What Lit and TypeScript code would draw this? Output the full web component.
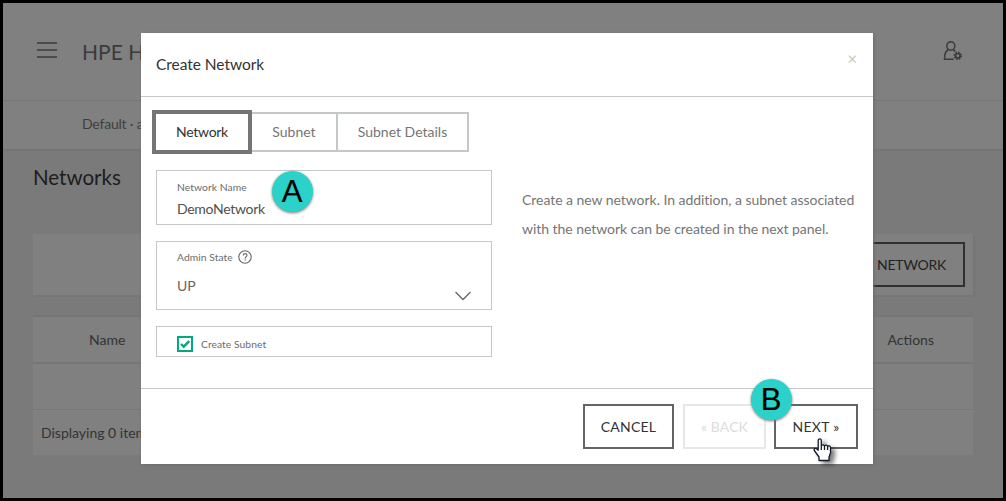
import { LitElement, html, css } from "lit";
import { customElement } from "lit/decorators.js";

@customElement("app-root")
export class AppRoot extends LitElement {
  static styles = css`
    :host { display: block; font-family: "Lato", sans-serif; color: #333; }
    * { box-sizing: border-box; }
    .screen { position: relative; width: 1006px; height: 501px; border: 3px solid #000; overflow: hidden; background: #7a7a7a; }
    .top { height: 98px; background: #808080; border-bottom: 1px solid #757575; display: flex; align-items: center; padding: 0 40px 0 34px; }
    .menu { width: 20px; height: 16px; margin: -3px 25px 0 0; }
    .brand { font-size: 21px; flex: 1; white-space: nowrap; color: #3b3b3b; }
    .user { margin-top: -2px; }
    .nav { height: 50px; background: #808080; border-bottom: 2px solid #757575; padding: 0 79px; line-height: 46px; font-size: 14px; letter-spacing: -.2px; color: #3f3f3f; }
    .page { padding: 0 30px; }
    h1 { font-weight: 400; font-size: 20.500px; line-height: 24px; margin: 14px 0 45px; color: #1d1d1d; }
    .bar { height: 61px; background: #808080; box-shadow: 2px 2px 0 #767676; padding: 8px 8px; display: flex; justify-content: flex-end; margin-bottom: 20px; }
    .ghost { height: 45px; border: 2px solid #303030; width: 190px; text-align: right; padding-right: 17px; line-height: 42px; font-size: 14px; color: #222; letter-spacing: -.25px; }
    .row { background: #808080; height: 46px; display: flex; justify-content: space-between; line-height: 45px; font-size: 14px; color: #333; }
    .head { height: 49px; border-top: 2px solid #767676; border-bottom: 2px solid #767676; padding: 0 39px 0 56px; }
    .rule { border-bottom: 1px solid #767676; }
    .foot { height: 45px; padding-left: 8px; }
    .modal { position: absolute; left: 138px; top: 30px; width: 732px; height: 431px; background: #fff; display: flex; flex-direction: column; box-shadow: 1px 1px 3px #6c6c6c; }
    .mh { height: 64px; border-bottom: 1px solid #c5c9c9; display: flex; justify-content: space-between; padding: 0 15px; line-height: 62px; font-size: 15.500px; letter-spacing: -.04px; }
    .close { color: #c8c8c8; font-size: 17px; line-height: 51px; margin-right: 1px; }
    .mb { flex: 1; padding: 13px 15px 0; }
    .tabs { display: flex; align-items: center; margin: 0 0 16px -4px; height: 44px; }
    .tab { height: 40px; border: 2px solid #c4c9c8; border-left: 0; line-height: 36px; text-align: center; font-size: 14px; color: #757575; }
    .on { height: 44px; width: 100px; border: 4px solid #757575; color: #333; letter-spacing: -.3px; }
    .t2 { width: 86px; } .t3 { width: 131px; }
    .cols { display: flex; gap: 30px; }
    .form { width: 336px; }
    .field { border: 1px solid #c4c9c8; margin-bottom: 16px; padding: 0 20px; color: #666; }
    .f1 { height: 55px; } .f2 { height: 69px; } .f3 { height: 31px; display: flex; gap: 8px; align-items: center; padding-top: 4px; }
    .label { font-size: 10.300px; line-height: 14px; color: #6c6c6c; letter-spacing: .06px; }
    .f1 .label { padding-top: 9px; }
    .f1 .value { padding-top: 6px; color: #4f4f4f; letter-spacing: -.3px; }
    .value { font-size: 14px; line-height: 18px; }
    .f2 .label { display: flex; gap: 5px; align-items: center; padding-top: 8px; }
    .f2 .label svg { margin-top: -1px; }
    .sel { display: flex; justify-content: space-between; padding-top: 13px; }
    .sel svg { margin-top: 14px; }
    .check { width: 16px; height: 16px; border: 2px solid #01a982; display: block; }
    .desc { font-size: 14px; line-height: 29px; color: #757575; padding-top: 15px; white-space: nowrap; letter-spacing: -.045px; }
    .mf { height: 76px; border-top: 1px solid #c5c9c9; padding: 15px 15px 0; display: flex; justify-content: flex-end; }
    .btn { height: 45px; border: 2px solid #636465; text-align: center; line-height: 42px; font-size: 14px; color: #333; letter-spacing: .2px; }
    .cancel { width: 91px; margin-right: 9px; } .back { width: 83px; margin-right: 8px; border-color: #e6e8e8; color: #dcdcdc; letter-spacing: .1px; } .next { width: 84px; letter-spacing: .3px; }
    .badge { position: absolute; width: 41px; height: 41px; border-radius: 50%; background: #2ad2c9; color: #000; font: 31px/41px "Liberation Sans", sans-serif; text-align: center; box-shadow: 0 1px 3px #777; -webkit-text-stroke: .2px #000; }
    .a { left: 268.500px; top: 168px; } .b { left: 747.500px; top: 376px; }
    .cursor { position: absolute; left: 810px; top: 433px; filter: drop-shadow(4px 3px 2px rgba(0, 0, 0, .5)); }
  `;

  render() {
    return html`
      <div class="screen">
        <header class="top">
          <svg class="menu" width="20" height="16" viewBox="0 0 20 16" fill="none" stroke="#3b3b3b" stroke-width="1.500"><path d="M0 1h20M0 8h20M0 15h20"/></svg>
          <div class="brand">HPE H</div>
          <svg class="user" width="20" height="20" viewBox="0 0 20 20" fill="none" stroke="#3b3b3b" stroke-width="1.500"><ellipse cx="7.800" cy="5" rx="4" ry="4.200"/><path d="M5.300 8.800C2.700 10 1.500 12 1.500 18.300h9M10.300 8.800l2 1.500"/><circle cx="14.800" cy="14.800" r="2.300" stroke-width="1.700"/><circle cx="14.800" cy="14.800" r="3.600" stroke-dasharray="1.400 1.430"/></svg>
        </header>
        <div class="nav">Default · a</div>
        <main class="page">
          <h1>Networks</h1>
          <div class="bar"><div class="ghost">NETWORK</div></div>
          <div class="row head"><span>Name</span><span>Actions</span></div>
          <div class="row rule"></div>
          <div class="row foot">Displaying 0 items</div>
        </main>
        <section class="modal">
          <div class="mh"><span>Create Network</span><span class="close">×</span></div>
          <div class="mb">
            <div class="tabs"><div class="tab on">Network</div><div class="tab t2">Subnet</div><div class="tab t3">Subnet Details</div></div>
            <div class="cols">
              <div class="form">
                <div class="field f1"><div class="label">Network Name</div><div class="value">DemoNetwork</div></div>
                <div class="field f2">
                  <div class="label"><span>Admin State</span><svg width="14" height="14" viewBox="0 0 14 14" fill="none" stroke="#666" stroke-width="1.100"><circle cx="7" cy="7" r="6.200"/><path d="M5.200 5.500c0-2.500 3.800-2.400 3.800-.2C9 6.600 7.200 6.600 7.200 8.400M7.200 9.300v1.300"/></svg></div>
                  <div class="sel"><span class="value">UP</span><svg width="16" height="10" viewBox="0 0 16 10" fill="none" stroke="#666" stroke-width="1.300"><path d="M.5 1l7.500 7.500L15.500 1"/></svg></div>
                </div>
                <div class="field f3"><svg class="check" viewBox="0 0 12 12" fill="none" stroke="#01a982" stroke-width="2.400"><path d="M2 6l2.700 2.700L10.200 3.200"/></svg><span class="label">Create Subnet</span></div>
              </div>
              <div class="desc">Create a new network. In addition, a subnet associated<br>with the network can be created in the next panel.</div>
            </div>
          </div>
          <div class="mf"><div class="btn cancel">CANCEL</div><div class="btn back">« BACK</div><div class="btn next">NEXT »</div></div>
        </section>
        <div class="badge a">A</div>
        <div class="badge b">B</div>
        <svg class="cursor" width="20" height="26" viewBox="0 0 20 26"><path d="M5.200 4.500v9.700L3.600 12.800c-1.500-1.100-3.100.2-2.300 1.700L6 21v3.500h10V21l1.500-4v-5.500c0-1.900-2.400-2-2.900-.6 0-2-2.700-2.300-3.100-.5 0-1.900-2.800-2.100-3.200-.4V4.500c0-2.300-3.100-2.300-3.100 0zM8.300 10v4M11.500 10.400V14M14.600 11v3" fill="#fff" stroke="#111827" stroke-width="1.300" stroke-linejoin="round"/></svg>
      </div>`;
  }
}
